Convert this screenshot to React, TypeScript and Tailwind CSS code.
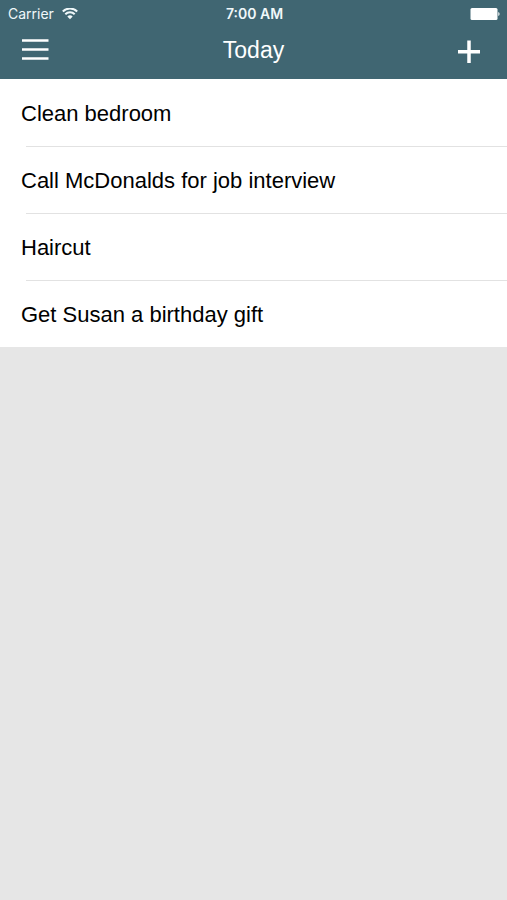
const tasks = [
  "Clean bedroom",
  "Call McDonalds for job interview",
  "Haircut",
  "Get Susan a birthday gift",
];

function StatusBar() {
  return (
    <div className="grid h-7 grid-cols-3 items-center pl-2 pr-1.5 font-['Inter',sans-serif] text-sm leading-4 text-[#f0f8fa]">
      <div className="flex items-center gap-2">
        <span>Carrier</span>
        <svg className="h-3 w-4" viewBox="0 0 16 12" fill="none" stroke="currentColor" strokeWidth="2" aria-hidden="true">
          <path d="M.8 3.500a10.200 10.200 0 0 1 14.400 0" />
          <path d="M3.300 6.300a6.600 6.600 0 0 1 9.400 0" />
          <path d="M8 11.200 5.300 8.500a3.800 3.800 0 0 1 5.400 0Z" fill="currentColor" stroke="none" />
        </svg>
      </div>
      <time className="text-center font-semibold">7:00 AM</time>
      <svg className="h-3 w-8 justify-self-end text-white" viewBox="0 0 32 12" fill="currentColor" aria-hidden="true">
        <rect x="1.500" y="0" width="27" height="12" rx="1.500" />
        <path d="M29.300 4a2.200 2.200 0 0 1 0 4Z" />
      </svg>
    </div>
  );
}

export default function App() {
  return (
    <div className="min-h-screen bg-[#e6e6e6] font-['Liberation_Sans',Arial,sans-serif] text-black">
      <header className="bg-[#406672] text-white">
        <StatusBar />
        <div className="grid h-[51px] grid-cols-3 items-start px-5 pt-2">
          <button type="button" aria-label="Menu" className="w-8">
            <svg className="h-7 w-8" viewBox="0 0 32 28" fill="none" stroke="currentColor" strokeWidth="2.700" aria-hidden="true">
              <path d="M2 4.500h26.500M2 13.500h26.500M2 22.500h26.500" />
            </svg>
          </button>
          <h1 className="text-center text-[23px] leading-7">Today</h1>
          <button type="button" aria-label="Add task" className="w-8 justify-self-end">
            <svg className="h-8 w-8" viewBox="0 0 32 32" fill="none" stroke="currentColor" strokeWidth="3.500" aria-hidden="true">
              <path d="M3 15.800h22M14 4.500v22.500" />
            </svg>
          </button>
        </div>
      </header>
      <main>
        <ul className="bg-white pt-px">
          {tasks.map((task) => (
            <li key={task} className="group">
              <div className="ml-[26px] h-px bg-[#e2e2e2] group-first:hidden" />
              <div className="flex h-[66px] items-center px-[21px] pt-0.5 text-[22px] leading-7">{task}</div>
            </li>
          ))}
        </ul>
      </main>
    </div>
  );
}
